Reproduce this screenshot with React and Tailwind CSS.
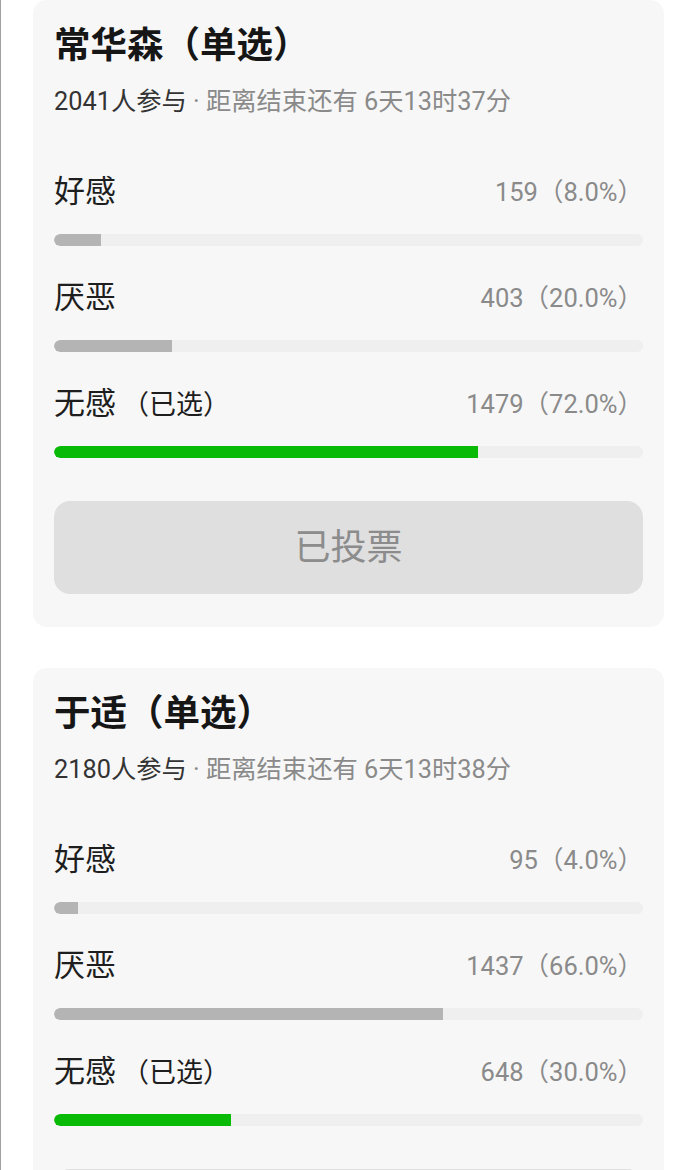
import React from 'react';

const polls = [
  {
    name: '常华森',
    total: 2041,
    remain: '6天13时37分',
    options: [
      { label: '好感', count: 159, pct: 8.0 },
      { label: '厌恶', count: 403, pct: 20.0 },
      { label: '无感', count: 1479, pct: 72.0, picked: true },
    ],
  },
  {
    name: '于适',
    total: 2180,
    remain: '6天13时38分',
    options: [
      { label: '好感', count: 95, pct: 4.0 },
      { label: '厌恶', count: 1437, pct: 66.0 },
      { label: '无感', count: 648, pct: 30.0, picked: true },
    ],
  },
];

const OptionRow = ({ option }) => (
  <div className="pb-[32px]">
    <div className="flex items-center justify-between h-[40px]">
      <div className="text-[31px] text-[#1e1e1e] leading-[40px]">
        {option.label}
        {option.picked && <span className="text-[27px] ml-[6px]">（已选）</span>}
      </div>
      <div className="text-[25.5px] text-[#8a8a8a]">
        {option.count}（{option.pct.toFixed(1)}%）
      </div>
    </div>
    <div className="mt-[22px] h-[12px] rounded-[6px] bg-[#efefef] overflow-hidden">
      <div
        className={option.picked ? 'h-full rounded-l-[6px] bg-[#09bb07]' : 'h-full rounded-l-[6px] bg-[#b4b4b4]'}
        style={{ width: `${option.pct}%` }}
      />
    </div>
  </div>
);

const PollCard = ({ poll }) => (
  <div className="bg-[#f7f7f7] rounded-[14px] px-[21px] pt-[25px] pb-[33px]">
    <h2 className="text-[36.5px] font-bold text-[#161616] leading-[42px]">{poll.name}（单选）</h2>
    <p className="mt-[19px] text-[25.3px] leading-[32px] text-[#8a8a8a]">
      <span className="text-[#333333]">{poll.total}人参与</span> · 距离结束还有 {poll.remain}
    </p>
    <div className="mt-[54px]">
      {poll.options.map((option, index) => (
        <OptionRow key={index} option={option} />
      ))}
    </div>
    <div className="mt-[11px] h-[93px] rounded-[16px] bg-[#dfdfdf] flex items-center justify-center text-[36px] text-[#8c8c8c]">
      已投票
    </div>
  </div>
);

export default function App() {
  return (
    <div
      className="min-h-screen bg-white border-l border-[#a0a0a0] pl-[32px] pr-[26px] flex flex-col gap-[41px]"
      style={{ fontFamily: 'Roboto, "Noto Sans CJK SC", sans-serif' }}
    >
      {polls.map((poll, index) => (
        <PollCard key={index} poll={poll} />
      ))}
    </div>
  );
}
